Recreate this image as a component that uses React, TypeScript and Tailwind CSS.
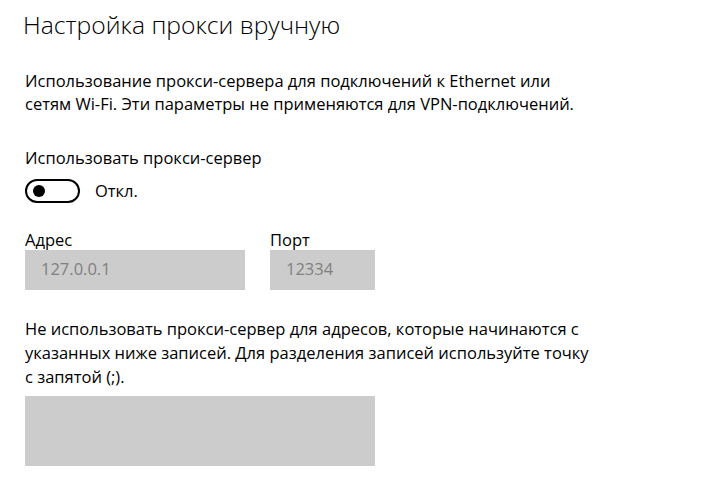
import React from "react";

const font = { fontFamily: '"Open Sans", "Noto Sans", sans-serif' };

function Toggle() {
  return (
    <div className="flex items-center gap-[15px]">
      <div className="flex h-[24px] w-[55px] items-center rounded-full border-2 border-black px-[6px]">
        <div className="h-[12px] w-[12px] rounded-full bg-black" />
      </div>
      <span className="text-[16.5px] text-black">Откл.</span>
    </div>
  );
}

export default function App() {
  return (
    <div className="min-h-[488px] w-[714px] bg-white text-black" style={font}>
      <div className="px-[25px]">
        <h1 className="-ml-[2px] pt-[8px] text-[24.7px] font-light leading-[34px]">Настройка прокси вручную</h1>

        <p className="mt-[27px] text-[16.5px] leading-[23px]">
          Использование прокси-сервера для подключений к Ethernet или
          <br />
          сетям Wi-Fi. Эти параметры не применяются для VPN-подключений.
        </p>

        <p className="mt-[32px] text-[16.5px] leading-[22px]">Использовать прокси-сервер</p>
        <div className="mt-[10px]">
          <Toggle />
        </div>

        <div className="mt-[26px] flex gap-[25px]">
          <div className="flex flex-col">
            <span className="text-[16.5px] leading-[20px]">Адрес</span>
            <div className="flex h-[40px] w-[220px] items-center bg-[#cccccc] px-[16px] text-[16.5px] text-[#808080]">
              127.0.0.1
            </div>
          </div>
          <div className="flex flex-col">
            <span className="text-[16.5px] leading-[20px]">Порт</span>
            <div className="flex h-[40px] w-[105px] items-center bg-[#cccccc] px-[16px] text-[16.5px] text-[#808080]">
              12334
            </div>
          </div>
        </div>

        <p className="mt-[27px] text-[16.5px] leading-[24px]">
          Не использовать прокси-сервер для адресов, которые начинаются с
          <br />
          указанных ниже записей. Для разделения записей используйте точку
          <br />с запятой (;).
        </p>

        <div className="mt-[7px] h-[70px] w-[350px] bg-[#cccccc]" />
      </div>
    </div>
  );
}
